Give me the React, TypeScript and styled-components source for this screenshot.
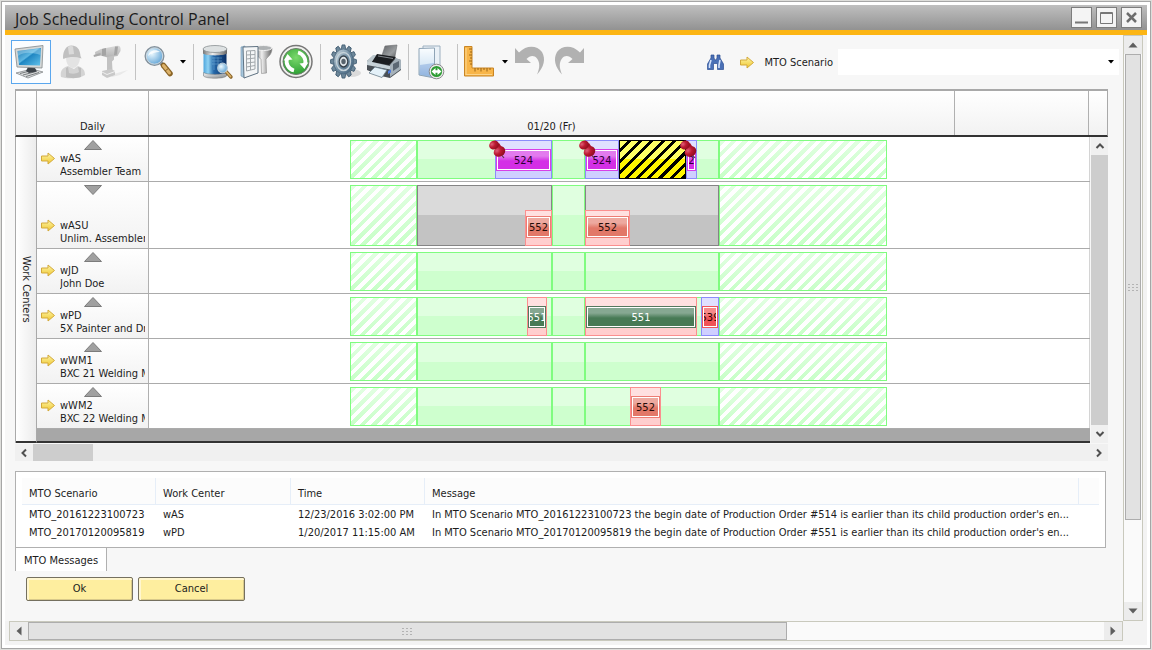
import React from 'react';
import styled, { createGlobalStyle, css } from 'styled-components';

const GlobalStyle = createGlobalStyle`
  *, *::before, *::after { box-sizing: border-box; }
  body {
    margin: 0;
    background: #dededb;
    color: #1c1c1c;
    font-family: 'DejaVu Sans Condensed', 'DejaVu Sans', Tahoma, sans-serif;
    font-size: 11px;
    line-height: 13px;
  }
  button, select { font: inherit; color: inherit; }
  svg { display: block; flex: none; }
`;

/* ---------- window ---------- */

const Page = styled.div`
  display: flex;
  min-height: 100vh;
  padding: 1px;
`;

const Window = styled.main`
  flex: 1;
  min-width: 0;
  display: flex;
  flex-direction: column;
  padding: 3px;
  border: 1px solid #a6a6a6;
  background: #fff;
`;

const TitleBar = styled.header`
  display: flex;
  align-items: center;
  gap: 4px;
  height: 30px;
  padding: 0 5px 0 10px;
  border-bottom: 5px solid #fcb514;
  background: linear-gradient(#bfbfbf, #929292);
`;

const Title = styled.h1`
  flex: 1;
  margin: 0;
  padding-top: 2px;
  font: 400 16px/24px 'Open Sans', 'Segoe UI', sans-serif;
  color: #1b1b1b;
  white-space: nowrap;
`;

const WindowButton = styled.button`
  display: grid;
  place-items: center;
  width: 21px;
  height: 21px;
  padding: 0;
  border: 1px solid #7d7d7d;
  background: #f4f4f4;
`;

const Body = styled.div`
  flex: 1;
  display: grid;
  grid-template-columns: minmax(0, 1fr) 20px;
  grid-template-rows: 1fr 20px;
  padding: 0 4px 4px 0;
  background: #f3f3f3;
`;

const Content = styled.div`
  display: flex;
  flex-direction: column;
  padding-bottom: 18px;
  background: #f7f7f7;
`;

/* ---------- toolbar ---------- */

const Toolbar = styled.div`
  display: flex;
  align-items: center;
  gap: 3px;
  height: 54px;
  padding: 0 4px 0 6px;
`;

const ToolButton = styled.button<{ $active?: boolean; $menu?: boolean }>`
  display: flex;
  align-items: center;
  justify-content: ${p => (p.$menu ? 'space-between' : 'center')};
  width: ${p => (p.$active ? 40 : p.$menu ? 45 : 36)}px;
  height: 44px;
  padding: 0;
  border: 0;
  background: none;
  ${p =>
    p.$active &&
    css`
      border: 1px solid #5aa7ee;
      background: #fbfdff;
    `}
`;

const Separator = styled.span`
  width: 1px;
  height: 36px;
  margin: 0 3px;
  background: #c3c3c3;
`;

const Spacer = styled.span`
  flex: 1;
`;

const Scenario = styled.label`
  display: flex;
  align-items: center;
  gap: 5px;
  white-space: nowrap;
`;

const ScenarioIcons = styled.span`
  display: flex;
  align-items: center;
  gap: 16px;
  margin-right: 5px;
`;

const SelectBox = styled.span`
  display: grid;
  align-items: center;
  width: 281px;
  background: #fff;

  svg {
    grid-area: 1 / 1;
    justify-self: end;
    margin-right: 4px;
    pointer-events: none;
  }
`;

const Select = styled.select`
  grid-area: 1 / 1;
  appearance: none;
  width: 100%;
  height: 26px;
  padding: 0 16px 0 4px;
  border: 0;
  background: #fff;
`;

/* ---------- schedule ---------- */

const Schedule = styled.section`
  margin: 0 15px 0 10px;
`;

const ScheduleHead = styled.div`
  display: grid;
  grid-template-columns: 21px 112px minmax(0, 1fr) 18px;
  height: 48px;
  border: solid #a9a9a9;
  border-width: 2px 1px 0 1px;
  border-bottom: 2px solid #333;
  background: linear-gradient(#fff, #f2f2f2);
`;

const HeadCell = styled.div`
  display: flex;
  align-items: flex-end;
  justify-content: center;
  padding-bottom: 2px;
  border-right: 1px solid #b0b0b0;
`;

const HeadTrack = styled.div`
  display: flex;
  border-right: 1px solid #b0b0b0;
`;

const DayCell = styled(HeadCell)`
  width: 806px;
`;

const ScheduleBody = styled.div`
  display: grid;
  grid-template-columns: 21px minmax(0, 1fr) 18px;
  border-left: 1px solid #a9a9a9;
`;

const SideTitle = styled.div`
  display: flex;
  align-items: center;
  justify-content: center;
  border-right: 1px solid #a9a9a9;
  border-bottom: 2px solid #333;
  background: linear-gradient(90deg, #fff, #ececec);
  writing-mode: vertical-rl;
`;

const Rows = styled.div`
  min-width: 0;
  padding-bottom: 12px;
  border-bottom: 2px solid #333;
  background: #a7a7a7;
`;

const Row = styled.div<{ $tall?: boolean }>`
  display: grid;
  grid-template-columns: 112px minmax(0, 1fr);
  height: ${p => (p.$tall ? 67 : 45)}px;
  border-bottom: 1px solid #ababab;
  background: #fff;
`;

const RowLabel = styled.div`
  display: flex;
  flex-direction: column;
  justify-content: space-between;
  min-width: 0;
  padding: 3px 3px 3px 4px;
  border-right: 1px solid #b0b0b0;
  background: linear-gradient(#fff, #f2f2f2);
`;

const Toggle = styled.button`
  align-self: center;
  width: 18px;
  height: 10px;
  padding: 0;
  border: 0;
  background: none;
`;

const RowName = styled.div`
  display: grid;
  grid-template-columns: 14px minmax(0, 1fr);
  column-gap: 5px;
  white-space: nowrap;
`;

const Clipped = styled.span`
  grid-column: 2;
  overflow: hidden;
`;

const Lane = styled.div`
  position: relative;
  overflow: hidden;
  border-right: 1px solid #d4d4d4;
`;

type Span = { $left: number; $width: number };

const placed = css<Span>`
  position: absolute;
  top: 3px;
  bottom: 2px;
  left: ${p => p.$left}px;
  width: ${p => p.$width}px;
`;

const Band = styled.div<Span & { $kind: 'shift' | 'off' | 'blocked' | 'down' }>`
  ${placed}
  border: 1px solid #80fc80;
  ${p => p.$kind === 'shift' && css`
    background: linear-gradient(#e0ffe0 50%, #ceffce 50%);
  `}
  ${p => p.$kind === 'off' && css`
    background:
      repeating-linear-gradient(135deg, transparent 0 4px, #fff 4px 8px),
      linear-gradient(#e2ffe2, #c8ffc8);
  `}
  ${p => p.$kind === 'blocked' && css`
    border-color: #858585;
    background: linear-gradient(#dadada 50%, #c3c3c3 50%);
  `}
  ${p => p.$kind === 'down' && css`
    border-color: #000;
    background:
      repeating-linear-gradient(135deg, transparent 0 5px, #000 5px 8px),
      linear-gradient(#ffff66 50%, #fff500 50%);
  `}
`;

type Tone = 'magenta' | 'salmon' | 'green' | 'red';

const tones: Record<Tone, { edge: string; top: string; low: string; text: string }> = {
  magenta: { edge: '#d83fe8', top: '#e27bee', low: '#d42fe6', text: '#2b0030' },
  salmon: { edge: '#ee7d74', top: '#eda99f', low: '#e27868', text: '#240c08' },
  green: { edge: '#55795f', top: '#86a892', low: '#477a55', text: '#fff' },
  red: { edge: '#f0565c', top: '#f58a8a', low: '#ef5257', text: '#300' },
};

const Slot = styled.div<Span & { $blue?: boolean; $low?: boolean }>`
  ${placed}
  top: ${p => (p.$low ? 28 : 3)}px;
  padding: ${p => (p.$low ? 5 : 8)}px 0 0;
  border: 1px solid ${p => (p.$blue ? '#8c8cfa' : '#fb8f8f')};
  background: ${p =>
    p.$blue
      ? 'linear-gradient(#e0e0ff 50%, #cfcfff 50%)'
      : 'linear-gradient(#ffe0e0 50%, #ffcece 50%)'};
`;

const Order = styled.div<{ $tone: Tone }>`
  display: flex;
  align-items: center;
  justify-content: center;
  overflow: hidden;
  height: 22px;
  border: 1px solid ${p => tones[p.$tone].edge};
  box-shadow: inset 0 0 0 1px #fff;
  background: linear-gradient(
    ${p => tones[p.$tone].top},
    ${p => tones[p.$tone].top} 30%,
    ${p => tones[p.$tone].low} 55%
  );
  color: ${p => tones[p.$tone].text};
`;

const OrderText = styled.span`
  display: flex;
  justify-content: center;
  min-width: 0;
  margin: 0 1px;
  overflow: hidden;
`;

const Pin = styled.span`
  position: absolute;
  top: -2px;
  left: -8px;
`;

/* ---------- scroll bars ---------- */

const InnerVBar = styled.div`
  display: flex;
  flex-direction: column;
  width: 17px;
  margin-left: 1px;
  background: #f0f0f0;
`;

const InnerHBar = styled.div`
  display: flex;
  height: 17px;
  margin-top: 1px;
  background: #f0f0f0;
`;

const ArrowButton = styled.button`
  display: grid;
  place-items: center;
  flex: none;
  width: 18px;
  height: 18px;
  padding: 0;
  border: 0;
  background: none;
`;

const InnerHThumb = styled.div`
  width: 60px;
  background: #cdcdcd;
`;

const InnerVThumb = styled.div`
  flex: 1;
  background: #cdcdcd;
`;

const OuterBar = styled.div<{ $vertical?: boolean }>`
  display: flex;
  flex-direction: ${p => (p.$vertical ? 'column' : 'row')};
  justify-content: space-between;
  margin-left: ${p => (p.$vertical ? 0 : 4)}px;
  border: 1px solid #c9c9bd;
  background: #fafafa;

  ${ArrowButton} {
    background: #ececec;
  }
`;

const OuterTrack = styled.div<{ $vertical?: boolean }>`
  flex: 1;
  display: flex;
  flex-direction: ${p => (p.$vertical ? 'column' : 'row')};
`;

const OuterThumb = styled.div<{ $vertical?: boolean }>`
  display: grid;
  place-items: center;
  flex: 0 0 ${p => (p.$vertical ? '85%' : '70.5%')};
  margin: ${p => (p.$vertical ? '0 1px' : '0')};
  border: 1px solid #adadad;
  background: #e2e2e2;
`;

/* ---------- messages ---------- */

const Messages = styled.section`
  margin: 10px 17px 0 10px;
  padding: 6px 6px 6px 6px;
  border: 1px solid #b0b0b0;
  background: #fff;
`;

const MessageTable = styled.table`
  width: 100%;
  table-layout: fixed;
  border-collapse: separate;
  border-spacing: 0;

  th, td {
    padding: 0 0 0 7px;
    font-weight: 400;
    text-align: left;
    white-space: nowrap;
  }
  th {
    height: 27px;
    padding-top: 4px;
    border-right: 1px solid #e6eef8;
    border-bottom: 1px solid #e6eef8;
    background: #fcfcfc;
  }
  th:last-child { border-right: 0; }
  tbody td { height: 18px; }
`;

const Col = styled.col<{ $w?: number }>`
  width: ${p => (p.$w ? `${p.$w}px` : 'auto')};
`;

const Tab = styled.button`
  align-self: flex-start;
  height: 23px;
  margin-left: 10px;
  padding: 2px 8px 0;
  border: solid #b0b0b0;
  border-width: 0 1px;
  background: #fff;
`;

const Actions = styled.div`
  display: flex;
  gap: 5px;
  margin: 6px 0 0 21px;
`;

const ActionButton = styled.button`
  width: 107px;
  height: 24px;
  padding: 0 0 2px;
  border: 1px solid #75705f;
  border-radius: 2px;
  box-shadow: inset 1px 1px 0 1px #fff6cf, inset -1px -1px 0 #d8c98a;
  background: #feee9f;
`;

/* ---------- drawings ---------- */

const Icon = ({ children, w = 36, h = 36 }: { children: React.ReactNode; w?: number; h?: number }) => (
  <svg width={w} height={h} viewBox={`0 0 ${w} ${h}`} aria-hidden="true">{children}</svg>
);

const Defs = styled.svg`
  position: absolute;
`;

const Gradients = () => (
  <Defs width="0" height="0" aria-hidden="true">
    <defs>
      <linearGradient id="screen" x1="0" y1="0" x2="1" y2="1">
        <stop offset="0" stopColor="#1470ad" /><stop offset=".45" stopColor="#5db7e2" />
        <stop offset=".5" stopColor="#1f86c2" /><stop offset="1" stopColor="#63c3ec" />
      </linearGradient>
      <linearGradient id="steel" x1="0" y1="0" x2="1" y2="1">
        <stop offset="0" stopColor="#f7f7f7" /><stop offset="1" stopColor="#80868a" />
      </linearGradient>
      <linearGradient id="ghost" x1="0" y1="0" x2="0" y2="1">
        <stop offset="0" stopColor="#d9d9d9" /><stop offset="1" stopColor="#b4b4b4" />
      </linearGradient>
      <linearGradient id="tank">
        <stop offset="0" stopColor="#4fa6dd" /><stop offset=".2" stopColor="#8fd2f3" />
        <stop offset=".45" stopColor="#2467a8" /><stop offset="1" stopColor="#0a2f66" />
      </linearGradient>
      <linearGradient id="funnel">
        <stop offset="0" stopColor="#777" /><stop offset=".4" stopColor="#eee" /><stop offset="1" stopColor="#666" />
      </linearGradient>
      <linearGradient id="gearFill" x1="0" y1="0" x2="1" y2="1">
        <stop offset="0" stopColor="#d3dee4" /><stop offset=".5" stopColor="#7390a5" /><stop offset="1" stopColor="#3f5d76" />
      </linearGradient>
      <radialGradient id="lens" cx=".35" cy=".35" r=".75">
        <stop offset="0" stopColor="#eefaff" /><stop offset="1" stopColor="#549cd2" />
      </radialGradient>
      <radialGradient id="leaf" cx=".5" cy=".35" r=".65">
        <stop offset="0" stopColor="#7bd96c" /><stop offset="1" stopColor="#2ca033" />
      </radialGradient>
      <linearGradient id="glass" x1="0" y1="0" x2="0" y2="1">
        <stop offset="0" stopColor="#fafdff" /><stop offset=".6" stopColor="#d6e7f5" /><stop offset="1" stopColor="#8db4dd" />
      </linearGradient>
      <linearGradient id="gold" x1="0" y1="0" x2="0" y2="1">
        <stop offset="0" stopColor="#fdf6a8" /><stop offset="1" stopColor="#f0c62e" />
      </linearGradient>
      <linearGradient id="paper" x1="0" y1="0" x2="1" y2="1">
        <stop offset="0" stopColor="#5d6063" /><stop offset=".6" stopColor="#9b9ea0" /><stop offset="1" stopColor="#55585a" />
      </linearGradient>
      <radialGradient id="ruby" cx=".35" cy=".3" r=".75">
        <stop offset="0" stopColor="#e0607a" /><stop offset=".45" stopColor="#bd1a32" /><stop offset="1" stopColor="#8e0c1e" />
      </radialGradient>
    </defs>
  </Defs>
);

const MonitorIcon = () => (
  <Icon>
    <path d="M3 29l16-4 11 3-15 6z" fill="#dcdedf" stroke="#85898b" strokeWidth=".8" />
    <path d="M7 29.500l12-3M10 31l13-3.500M13 32.500l13-4" stroke="#6b6f72" strokeWidth=".9" />
    <path d="M15 23l7 1 2 3.500-8 1.500-3-2z" fill="#3d4349" />
    <path d="M2 5l28-3.500-1 22.500-25-1z" fill="#d5d8d8" stroke="#84898a" strokeWidth=".8" />
    <path d="M4.500 7l23.500-3-1 17.500-21-.5z" fill="url(#screen)" />
    <path d="M5 12c7-5 15-3 22.500-1l.3-6.500L4.500 7z" fill="#bfe6f8" opacity=".4" />
  </Icon>
);

const WorkerIcon = () => (
  <Icon>
    <path d="M7 33c-1-6 1-9 7-11l6 3 4-3c5 2 7 4 7 9-6 4-18 4-24 2z" fill="#d4d4d4" />
    <path d="M14 23l1 6c3 1 7 1 10-1l-1-5 3 1v9c-4 1.500-11 1.500-15 0v-9z" fill="#bebebe" />
    <path d="M12 13c0 7 3 11 7 11s7-5 7-11z" fill="#e3e3e3" />
    <path d="M9 14c0-7 3-12.500 8.500-12.500S26 5 26.500 12l1 2.500c-6-2-12-2-18 .5z" fill="#c0c0c0" />
    <path d="M14 3c1-1 4-1.500 5-.5L20 10l-5 .5z" fill="#dadada" />
  </Icon>
);

const DrillIcon = () => (
  <Icon>
    <path d="M17 31l18-5-8 5-8 2z" fill="#e9e9e9" />
    <path d="M2 8l6-3 15-3c4-1 5 1 4.500 5l-3 5-10 1.500-7-2-5 1z" fill="url(#ghost)" />
    <path d="M.5 11l7-2v2l-6.500 2z" fill="#a9a9a9" />
    <path d="M9 5l4-1v7.500l-4 .5zM22 2.500l3 0-1 8-3 .8z" fill="#a4a4a4" />
    <path d="M14 13l7-1.500 0 4-2 2 .5 9h-5.500z" fill="#c2c2c2" />
    <path d="M9 27l9-2 4 2v4l-8 3-5-3z" fill="#c9c9c9" /><path d="M9 28l5 2.500 8-3" stroke="#efefef" fill="none" />
  </Icon>
);

const SearchIcon = () => (
  <Icon>
    <path d="M19 19l3 3.500" stroke="#7d858c" strokeWidth="3.500" />
    <path d="M21.500 21.500l6.500 8" stroke="#8a6426" strokeWidth="5.500" strokeLinecap="round" />
    <path d="M21.500 21.500l6 7.500" stroke="#dcb26a" strokeWidth="3" strokeLinecap="round" />
    <path d="M23 27l4-3" stroke="#8a6426" />
    <circle cx="12.500" cy="12" r="9" fill="url(#lens)" stroke="#83919c" strokeWidth="2" />
    <circle cx="12.500" cy="12" r="8.200" fill="none" stroke="#d6e3ec" strokeWidth=".9" />
    <path d="M6 12c1-5 7-8 12-4-4 0-9 1-12 4z" fill="#fff" opacity=".8" />
  </Icon>
);

const DatabaseIcon = () => (
  <Icon>
    <path d="M3.500 5v26c2 4 21 4 23 0V5z" fill="url(#tank)" />
    <path d="M3.500 28.500V32c2 3 21 3 23 0v-3.500c-3 2.500-20 2.500-23 0z" fill="url(#steel)" stroke="#777" strokeWidth=".5" />
    <path d="M3 5v4.500c3 2.500 21 2.500 24 0V5z" fill="url(#funnel)" />
    <ellipse cx="15" cy="5" rx="12" ry="3.500" fill="#dde1e2" stroke="#8a9093" strokeWidth=".8" />
    <path d="M12 14h10M12 17h10M12 20h7M14 13v13M18 13v9" stroke="#9ed5f3" strokeWidth=".8" opacity=".45" />
    <path d="M26 27.500l5 5.500" stroke="#8a6426" strokeWidth="3.400" strokeLinecap="round" />
    <path d="M26 27.500l4.500 5" stroke="#dcb26a" strokeWidth="1.800" strokeLinecap="round" />
    <circle cx="22.500" cy="24" r="4.800" fill="url(#lens)" stroke="#b4c9d8" strokeWidth="1.200" />
  </Icon>
);

const ReportFilterIcon = () => (
  <Icon>
    <path d="M16 4h17c0 6-3 8-6 11l.5 14-5 .5-.5-14c-3-3-6-6-6-11.500z" fill="url(#funnel)" stroke="#8a8a8a" strokeWidth=".6" />
    <ellipse cx="24.500" cy="4" rx="8.500" ry="2.500" fill="#aeb2b4" stroke="#f2f2f2" />
    <path d="M2 3l4-1v32l-4-2z" fill="#a8c8de" stroke="#6f92ab" strokeWidth=".6" />
    <path d="M4 3l15-.5v26.500L5 34z" fill="#f4f6f7" stroke="#5f7282" />
    <path d="M7.500 7l8.500-.5M7.500 11l8.500-.5M7.500 15l8.500-1M7.500 19l8.500-1M7.500 23l8.500-1.500M7.500 27l8.500-2M7.500 7v20M11.500 7v19M16 6.500V25" stroke="#a1a7ab" fill="none" />
  </Icon>
);

const RefreshIcon = () => (
  <Icon>
    <circle cx="18" cy="17.500" r="16" fill="#f0f0ee" stroke="#777" strokeWidth="1.500" />
    <circle cx="18" cy="17.500" r="13" fill="url(#leaf)" stroke="#6d7a6c" />
    <path d="M9 14.500a9.500 9.500 0 0 0 7 12" fill="none" stroke="#fff" strokeWidth="3.800" />
    <path d="M5.800 16.500L9.500 10l5 5.500z" fill="#fff" />
    <path d="M27 20.500a9.500 9.500 0 0 0-7-12" fill="none" stroke="#fff" strokeWidth="3.800" />
    <path d="M30.200 18.500L26.500 25l-5-5.500z" fill="#fff" />
  </Icon>
);

const gearTeeth = Array.from({ length: 12 }, (_, i) => i * 30);

const GearIcon = () => (
  <Icon>
    <ellipse cx="24" cy="29" rx="10" ry="4" fill="#dadada" />
    <g transform="translate(16.500 17.500) scale(.78 1)">
      {gearTeeth.map(angle => (
        <path key={angle} transform={`rotate(${angle})`} d="M-3-12l1.200-4.600h3.600L3-12z" fill="#6d8799" stroke="#3a566d" strokeWidth=".9" />
      ))}
      <circle r="12.500" fill="url(#gearFill)" stroke="#4d6a80" strokeWidth=".8" />
      <circle r="9" fill="none" stroke="#c6d3da" strokeWidth="1.600" />
      <circle r="5.500" fill="#dfe5e8" stroke="#37424b" strokeWidth="1.500" />
      <circle r="2.800" fill="#56626b" />
    </g>
  </Icon>
);

const PrinterIcon = () => (
  <Icon>
    <path d="M19 2l12-1-2.500 14-13-2z" fill="url(#paper)" stroke="#6a6c6e" strokeWidth=".6" />
    <path d="M1 17l7-6 20 3 7 2v10l-11 8-9-2L1 26z" fill="#494f55" />
    <path d="M1 17l6-6 5 0-7 8z" fill="#bcc8ce" />
    <path d="M24 21l6-7 5 2v9l-11 8z" fill="#a5b1ba" /><path d="M27 20l6-3v6l-6 4z" fill="#5c6874" />
    <path d="M11 10l19 3-7 8-17-3z" fill="#1b1d20" /><path d="M12 12l15 2.500" stroke="#83888d" />
    <path d="M1 17l5 1 18 4v3.500L1 21z" fill="#c7d2d8" />
    <path d="M9 23l12 3-5 7.500-13-4.500z" fill="#e4f1f9" stroke="#6b7f8c" strokeWidth=".8" />
    <path d="M22 27l3-1.500v3l-3 1.500z" fill="#4d7be0" />
  </Icon>
);

const CopyIcon = () => (
  <Icon>
    <path d="M8 2h17v26H8z" fill="#eaf1f7" stroke="#9db0c0" />
    <path d="M4 4.500l15.500-.5v30L4 31z" fill="url(#glass)" stroke="#8fa4b6" />
    <path d="M5 21l14-2v13.500L5 30.500z" fill="#8fb0e0" opacity=".6" />
    <circle cx="21.500" cy="27.500" r="7.300" fill="#ececec" stroke="#8a8a8a" />
    <circle cx="21.500" cy="27.500" r="5.600" fill="#2d9c33" />
    <path d="M16.500 27.500l4-3.500v2.300h2v-2.300l4 3.500-4 3.500v-2.300h-2v2.300z" fill="#fff" />
  </Icon>
);

const RulerIcon = () => (
  <Icon>
    <path d="M.5 2.500H8V24h21.500v8H.5z" fill="#f8b548" stroke="#c98524" />
    <path d="M2 4v26.500h26" fill="none" stroke="#fcd48a" strokeWidth="1.200" />
    <path d="M8 5H5M8 8H6M8 11H5M8 14H6M8 17H5M8 20H6M11 24v3.500M14 24v2M17 24v3.500M20 24v2M23 24v3.500M26 24v2" stroke="#9a6515" />
  </Icon>
);

const UndoIcon = ({ flip }: { flip?: boolean }) => (
  <Icon>
    <path
      transform={flip ? 'matrix(-1 0 0 1 36 0)' : undefined}
      d="M3 4l4 4.500C15 .5 25 1.500 30 8c4 7 2 15-5 22.500 3-7 3-12 0-16-3-3.500-7-3-10.500.5l4.500 4H3z"
      fill="#b1b1b1"
    />
  </Icon>
);

const BinocularsIcon = () => (
  <Icon w={17} h={17}>
    <path d="M4 1h3v3l1 2h1l1-2V1h3v3l3.500 6v5.500h-6V9.500h-4v6H.5V10L4 4z" fill="#4a70b6" stroke="#2c4f94" strokeWidth=".7" />
    <path d="M4 6L2.500 11v3M13 6l-1 5v3" stroke="#d5e3fa" strokeWidth="1.600" fill="none" />
  </Icon>
);

const GoldArrow = () => (
  <Icon w={14} h={13}>
    <path d="M.5 4h6.500V1l6.500 5.500L7 12V9H.5z" fill="url(#gold)" stroke="#d3a93a" />
  </Icon>
);

const PinIcon = () => (
  <Icon w={20} h={22}>
    <path d="M12 14l4 5" stroke="#5d3b46" strokeWidth="1.200" />
    <path d="M6 7l5-3 4 6-5 4z" fill="#a80f26" />
    <ellipse cx="11.500" cy="12.500" rx="6" ry="5" transform="rotate(-30 11.500 12.500)" fill="url(#ruby)" />
    <ellipse cx="6" cy="6" rx="5" ry="4.300" transform="rotate(-30 6 6)" fill="url(#ruby)" />
  </Icon>
);

const Caret = () => (
  <Icon w={8} h={4}><path d="M1 0h6L4 3.500z" fill="#000" /></Icon>
);

const turns = { up: 0, right: 90, down: 180, left: 270 };

const Chevron = ({ to }: { to: keyof typeof turns }) => (
  <Icon w={10} h={10}>
    <path transform={`rotate(${turns[to]} 5 5)`} d="M1.500 7L5 3.500 8.500 7" fill="none" stroke="#505050" strokeWidth="2" />
  </Icon>
);

const Wedge = ({ to }: { to: keyof typeof turns }) => (
  <Icon w={10} h={10}>
    <path transform={`rotate(${turns[to]} 5 5)`} d="M.5 7.500L5 2.500l4.500 5z" fill="#5e5e5e" />
  </Icon>
);

const Grip = () => (
  <Icon w={10} h={8}>
    <path d="M0 1.500h2m2 0h2m2 0h2M0 4.500h2m2 0h2m2 0h2M0 7.500h2m2 0h2m2 0h2" stroke="#b3b3b3" />
  </Icon>
);

/* ---------- data ---------- */

/** Width of one hour on the day track, in pixels. */
const HOUR = 805 / 24;

const span = (from: number, to: number): Span => {
  const left = Math.round(from * HOUR);
  return { $left: left, $width: Math.round(to * HOUR) - left };
};

type Job = { order: string; from: number; to: number; tone: Tone; blue?: boolean; pinned?: boolean };

type Center = {
  code: string;
  name: string;
  open?: boolean;
  blocked?: [number, number][];
  down?: [number, number];
  jobs: Job[];
};

const shifts: [number, number, 'off' | 'shift'][] = [
  [6, 8, 'off'],
  [8, 12, 'shift'],
  [12, 13, 'shift'],
  [13, 17, 'shift'],
  [17, 22, 'off'],
];

const centers: Center[] = [
  {
    code: 'wAS', name: 'Assembler Team', down: [14, 16],
    jobs: [
      { order: '524', from: 10.33, to: 12, tone: 'magenta', blue: true, pinned: true },
      { order: '524', from: 13, to: 14, tone: 'magenta', blue: true, pinned: true },
      { order: '524', from: 16, to: 16.33, tone: 'magenta', blue: true, pinned: true },
    ],
  },
  {
    code: 'wASU', name: 'Unlim. Assembler', open: true, blocked: [[8, 12], [13, 17]],
    jobs: [
      { order: '552', from: 11.22, to: 12, tone: 'salmon' },
      { order: '552', from: 13, to: 14.33, tone: 'salmon' },
    ],
  },
  { code: 'wJD', name: 'John Doe', jobs: [] },
  {
    code: 'wPD', name: '5X Painter and Dryer',
    jobs: [
      { order: '551', from: 11.27, to: 11.87, tone: 'green' },
      { order: '551', from: 13, to: 16.33, tone: 'green' },
      { order: '539', from: 16.47, to: 17, tone: 'red', blue: true },
    ],
  },
  { code: 'wWM1', name: 'BXC 21 Welding Machine', jobs: [] },
  {
    code: 'wWM2', name: 'BXC 22 Welding Machine',
    jobs: [{ order: '552', from: 14.33, to: 15.27, tone: 'salmon' }],
  },
];

const messages = [
  ['MTO_20161223100723', 'wAS', '12/23/2016 3:02:00 PM', "In MTO Scenario MTO_20161223100723 the begin date of Production Order #514 is earlier than its child production order's en..."],
  ['MTO_20170120095819', 'wPD', '1/20/2017 11:15:00 AM', "In MTO Scenario MTO_20170120095819 the begin date of Production Order #551 is earlier than its child production order's en..."],
];

/* ---------- page ---------- */

const CenterRow = ({ center }: { center: Center }) => (
  <Row $tall={center.open}>
    <RowLabel>
      <Toggle aria-label={`Toggle ${center.code}`}>
        <Icon w={18} h={10}>
          <path d={center.open ? 'M.5.5h17L9 9.500z' : 'M.5 9.500h17L9 .5z'} fill="#a0a0a0" stroke="#7c7c7c" />
        </Icon>
      </Toggle>
      <RowName>
        <GoldArrow />
        <Clipped>{center.code}</Clipped>
        <Clipped>{center.name}</Clipped>
      </RowName>
    </RowLabel>
    <Lane>
      {shifts.map(([from, to, kind]) => (
        <Band key={from} $kind={kind} {...span(from, to)} />
      ))}
      {center.blocked?.map(([from, to]) => (
        <Band key={from} $kind="blocked" {...span(from, to)} />
      ))}
      {center.down && <Band $kind="down" {...span(...center.down)} />}
      {center.jobs.map(job => (
        <Slot key={job.from} $blue={job.blue} $low={center.open} {...span(job.from, job.to)}>
          <Order $tone={job.tone}><OrderText>{job.order}</OrderText></Order>
          {job.pinned && <Pin><PinIcon /></Pin>}
        </Slot>
      ))}
    </Lane>
  </Row>
);

export default function App() {
  return (
    <Page>
      <GlobalStyle />
      <Gradients />
      <Window>
        <TitleBar>
          <Title>Job Scheduling Control Panel</Title>
          <WindowButton aria-label="Minimize">
            <Icon w={15} h={15}><path d="M1 12.500h13" stroke="#777" strokeWidth="2" /></Icon>
          </WindowButton>
          <WindowButton aria-label="Maximize">
            <Icon w={15} h={15}><path d="M1.500 2.500h12v11h-12zM1.500 3.500h12" fill="none" stroke="#777" /></Icon>
          </WindowButton>
          <WindowButton aria-label="Close">
            <Icon w={15} h={15}><path d="M3 3l9 9M12 3l-9 9" stroke="#6e6e6e" strokeWidth="2.500" /></Icon>
          </WindowButton>
        </TitleBar>

        <Body>
          <Content>
            <Toolbar>
              <ToolButton $active aria-label="Work centers"><MonitorIcon /></ToolButton>
              <ToolButton aria-label="Employees" disabled><WorkerIcon /></ToolButton>
              <ToolButton aria-label="Tools" disabled><DrillIcon /></ToolButton>
              <Separator />
              <ToolButton $menu aria-label="Zoom"><SearchIcon /><Caret /></ToolButton>
              <Separator />
              <ToolButton aria-label="Browse data"><DatabaseIcon /></ToolButton>
              <ToolButton aria-label="Filter"><ReportFilterIcon /></ToolButton>
              <ToolButton aria-label="Refresh"><RefreshIcon /></ToolButton>
              <Separator />
              <ToolButton aria-label="Settings"><GearIcon /></ToolButton>
              <ToolButton aria-label="Print"><PrinterIcon /></ToolButton>
              <Separator />
              <ToolButton aria-label="Fit"><CopyIcon /></ToolButton>
              <Separator />
              <ToolButton $menu aria-label="Scale"><RulerIcon /><Caret /></ToolButton>
              <ToolButton aria-label="Undo" disabled><UndoIcon /></ToolButton>
              <ToolButton aria-label="Redo" disabled><UndoIcon flip /></ToolButton>
              <Spacer />
              <Scenario>
                <ScenarioIcons><BinocularsIcon /><GoldArrow /></ScenarioIcons>
                MTO Scenario
                <SelectBox>
                  <Select defaultValue=""><option value="" /></Select>
                  <Caret />
                </SelectBox>
              </Scenario>
            </Toolbar>

            <Schedule>
              <ScheduleHead>
                <HeadCell />
                <HeadCell>Daily</HeadCell>
                <HeadTrack><DayCell>01/20 (Fr)</DayCell></HeadTrack>
              </ScheduleHead>
              <ScheduleBody>
                <SideTitle>Work Centers</SideTitle>
                <Rows>
                  {centers.map(center => <CenterRow key={center.code} center={center} />)}
                </Rows>
                <InnerVBar>
                  <ArrowButton aria-label="Scroll up"><Chevron to="up" /></ArrowButton>
                  <InnerVThumb />
                  <ArrowButton aria-label="Scroll down"><Chevron to="down" /></ArrowButton>
                </InnerVBar>
              </ScheduleBody>
              <InnerHBar>
                <ArrowButton aria-label="Scroll left"><Chevron to="left" /></ArrowButton>
                <InnerHThumb />
                <Spacer />
                <ArrowButton aria-label="Scroll right"><Chevron to="right" /></ArrowButton>
              </InnerHBar>
            </Schedule>

            <Messages>
              <MessageTable>
                <colgroup>
                  <Col $w={134} /><Col $w={135} /><Col $w={134} /><Col /><Col $w={20} />
                </colgroup>
                <thead>
                  <tr><th>MTO Scenario</th><th>Work Center</th><th>Time</th><th>Message</th><th /></tr>
                </thead>
                <tbody>
                  {messages.map(cells => (
                    <tr key={cells[0]}>{cells.map(cell => <td key={cell}>{cell}</td>)}<td /></tr>
                  ))}
                </tbody>
              </MessageTable>
            </Messages>
            <Tab>MTO Messages</Tab>
            <Actions>
              <ActionButton>Ok</ActionButton>
              <ActionButton>Cancel</ActionButton>
            </Actions>
          </Content>

          <OuterBar $vertical>
            <ArrowButton aria-label="Page up"><Wedge to="up" /></ArrowButton>
            <OuterTrack $vertical><OuterThumb $vertical><Grip /></OuterThumb></OuterTrack>
            <ArrowButton aria-label="Page down"><Wedge to="down" /></ArrowButton>
          </OuterBar>
          <OuterBar>
            <ArrowButton aria-label="Page left"><Wedge to="left" /></ArrowButton>
            <OuterTrack><OuterThumb><Grip /></OuterThumb></OuterTrack>
            <ArrowButton aria-label="Page right"><Wedge to="right" /></ArrowButton>
          </OuterBar>
        </Body>
      </Window>
    </Page>
  );
}
